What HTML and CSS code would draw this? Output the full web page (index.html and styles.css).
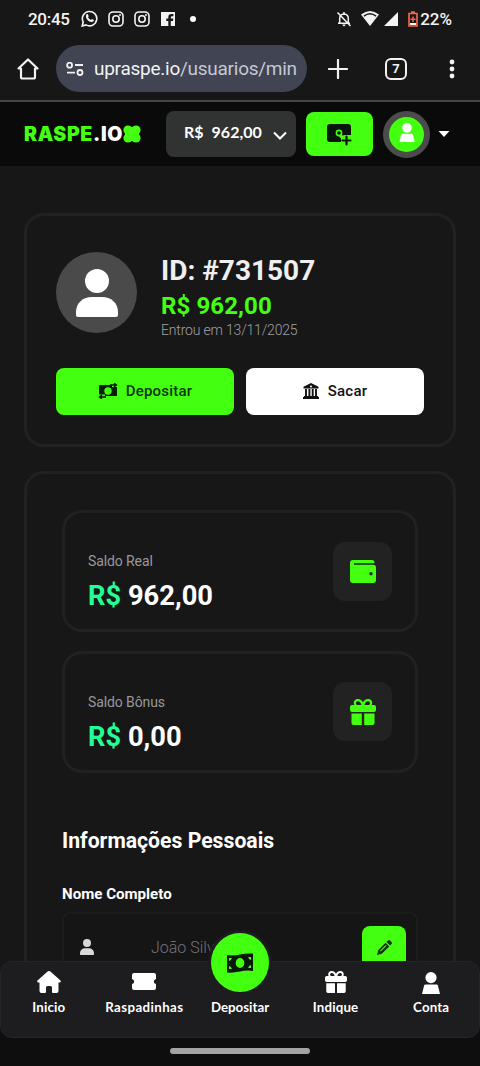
FILE: index.html
```html
<!DOCTYPE html>
<html lang="pt-BR">
<head>
<meta charset="utf-8">
<meta name="viewport" content="width=device-width, initial-scale=1">
<title>RASPE.IO - Minha conta</title>
<link rel="stylesheet" href="styles.css">
</head>
<body>
<svg class="defs" aria-hidden="true">
  <symbol id="instagram" viewBox="0 0 16 16"><g fill="none" stroke="currentColor" stroke-width="1.6"><rect x="1" y="1" width="14" height="14" rx="4"/><circle cx="8" cy="8" r="3.2"/></g><circle cx="12" cy="4" r="1"/></symbol>
  <symbol id="gift" viewBox="0 0 26 26"><path fill-rule="evenodd" d="M2 6H4.300C2.700 2.500 5 0 8 0C10.300 0 12 1.400 13 3.200C14 1.400 15.700 0 18 0C21 0 23.300 2.500 21.700 6H24Q26 6 26 8V11Q26 13 24 13H2Q0 13 0 11V8Q0 6 2 6ZM7 6H11.400C10.800 3.800 9.800 2.300 8 2.300C5.900 2.300 5.300 4.600 7 6ZM19 6C20.700 4.600 20.100 2.300 18 2.300C16.200 2.300 15.200 3.800 14.600 6Z"/><path d="M1.500 14.500H11.800V26H3.500Q1.500 26 1.500 24ZM14.200 14.500H24.500V24Q24.500 26 22.500 26H14.200Z"/></symbol>
  <symbol id="user" viewBox="0 0 42 48"><circle cx="21" cy="12" r="12"/><path d="M0 46V43C0 34 7 28 16 28H26C35 28 42 34 42 43V46Q42 48 40 48H2Q0 48 0 46Z"/></symbol>
  <symbol id="pawn" viewBox="0 0 18 22"><circle cx="9" cy="5.600" r="5.600"/><path d="M3.500 12.500H14.500Q15.500 12.500 15.900 13.600L18 22H0L2.100 13.600Q2.500 12.500 3.500 12.500Z"/></symbol>
</svg>
<div class="screen">
  <div class="status">
    <span class="clock">20:45</span>
    <div class="notices">
      <svg width="17" height="17" viewBox="0 0 17 17"><path d="M1.200 16L2.200 12A7.200 7.200 0 1 1 5 14.900Z" fill="none" stroke="currentColor" stroke-width="1.600"/><path d="M5.500 4.200L6.800 4L7.700 6.200L7 7.200Q7.900 9 9.900 9.900L11 8.900L13 9.900Q12.800 12 10.800 12Q6.600 11.600 5 7.400Q4.700 5.300 5.500 4.200Z"/></svg>
      <svg width="16" height="16"><use href="#instagram"/></svg>
      <svg width="16" height="16"><use href="#instagram"/></svg>
      <svg width="14" height="14" viewBox="0 0 14 14"><path d="M0 0H14V14H9.800V8.900H12L12.300 6.500H9.800V5.200Q9.800 4.200 11 4.200H12.400V2.100H10.500Q7.300 2.100 7.300 5V6.500H5.300V8.900H7.300V14H0Z"/></svg>
      <i class="more-dot"></i>
    </div>
    <div class="signals">
      <svg class="bell" width="16" height="16" viewBox="0 0 16 16"><g fill="none" stroke="currentColor" stroke-width="1.500"><path d="M3.700 12V7.500Q3.700 3.200 8 3Q12.300 3.200 12.300 7.500V12M2 12.300H14M8 1V3M1.500 1.500L14.500 15"/></g><path d="M6.300 13.500H9.700Q9.400 15.300 8 15.300Q6.600 15.300 6.300 13.500Z"/></svg>
      <svg class="wifi" width="18" height="15" viewBox="0 0 18 15"><path d="M0 3.600Q9-3.500 18 3.600L9 15Z"/><path d="M2.900 5.100Q9 .4 15.100 5.100" fill="none" stroke="#171819" stroke-width="1.400"/></svg>
      <svg class="cell" width="14" height="14" viewBox="0 0 14 14"><path d="M14 0V14H0Z"/></svg>
      <svg class="battery" width="10" height="16" viewBox="0 0 10 16"><path d="M1 2.500H9V15H1ZM3 1H7" fill="none" stroke="#ef6648" stroke-width="1.700"/><path d="M5 5.500V11M2.400 8.200H7.600" stroke="#ef6648" stroke-width="1.500"/><path d="M2 12H8V14H2Z"/></svg>
      <span>22%</span>
    </div>
  </div>

  <div class="browser">
    <svg class="home" width="22" height="22" viewBox="0 0 22 22"><path d="M4 10.500H1.500L11 1.500L20.500 10.500H18V19Q18 20.500 16.500 20.500H5.500Q4 20.500 4 19Z" fill="none" stroke="currentColor" stroke-width="2.200" stroke-linejoin="round"/></svg>
    <div class="address">
      <svg width="18" height="14" viewBox="0 0 18 14"><g fill="none" stroke="currentColor" stroke-width="1.800"><circle cx="3.600" cy="3.200" r="2.500"/><circle cx="14" cy="10.500" r="2.500"/><path d="M9 3H17M1 10.600H9"/></g></svg>
      <span class="url">upraspe.io<span>/usuarios/min</span></span>
    </div>
    <svg class="plus" width="20" height="20" viewBox="0 0 20 20"><path d="M10 1V19M1 10H19" fill="none" stroke="currentColor" stroke-width="2.200" stroke-linecap="round"/></svg>
    <span class="tabs">7</span>
    <svg class="kebab" width="6" height="20" viewBox="0 0 6 20"><circle cx="3" cy="3" r="2.400"/><circle cx="3" cy="10" r="2.400"/><circle cx="3" cy="17" r="2.400"/></svg>
  </div>

  <header class="site-header">
    <div class="logo"><span class="logo-green">RASPE</span><span>.IO</span><svg width="18" height="18" viewBox="0 0 18 18"><circle cx="5" cy="5" r="4.600"/><circle cx="13" cy="5" r="4.600"/><circle cx="5" cy="13" r="4.600"/><circle cx="13" cy="13" r="4.600"/><path d="M5 2H13V5H16V13H13V16H5V13H2V5H5Z"/></svg></div>
    <div class="balance"><span>R$</span><span>962,00</span><svg width="14" height="9" viewBox="0 0 14 9"><path d="M1 1.500L7 7.500L13 1.500" fill="none" stroke="currentColor" stroke-width="2"/></svg></div>
    <div class="add-funds"><svg width="25" height="22" viewBox="0 0 25 22"><rect x="0" y="0" width="24" height="18" rx="3" fill="#07150b"/><path d="M14 13Q15 11 18 11H25V22H14Z" fill="#43ff10"/><circle cx="12" cy="9" r="2.600" fill="none" stroke="#43ff10" stroke-width="1.600"/><path d="M13 11L17 16" stroke="#43ff10" stroke-width="3"/><path d="M19.500 12.500V20.500M15.500 16.500H23.500" stroke="#07150b" stroke-width="2.200" stroke-linecap="round"/></svg></div>
    <div class="header-avatar"><svg width="16" height="19"><use href="#pawn"/></svg></div>
    <svg class="caret" width="12" height="6" viewBox="0 0 12 6"><path d="M.5 0H11.500L6 6Z"/></svg>
  </header>

  <main class="content">
    <section class="panel profile">
      <div class="identity">
        <div class="avatar"><svg width="42" height="48"><use href="#user"/></svg></div>
        <div class="who">
          <h1>ID: #731507</h1>
          <strong>R$ 962,00</strong>
          <small>Entrou em 13/11/2025</small>
        </div>
      </div>
      <div class="actions">
        <a class="button deposit"><svg width="20" height="16" viewBox="0 0 20 16"><path fill-rule="evenodd" d="M2 2H14V4H19V13H7V11.500H1V3Q1 2 2 2ZM10 4.300A3.700 3.700 0 1 0 10 11.700A3.700 3.700 0 1 0 10 4.300Z"/><path d="M12 2H18M16 .2L18.500 2L16 4M8 14H1.500M4 12L1.500 14L4 15.800" fill="none" stroke="currentColor" stroke-width="1.400"/></svg>Depositar</a>
        <a class="button withdraw"><svg width="16" height="16" viewBox="0 0 16 16"><path d="M8 0L15.500 3.800V5.500H.5V3.800ZM1 13H15V14H16V16H0V14H1Z"/><path d="M3 6V13M6.400 6V13M9.700 6V13M13 6V13" stroke="currentColor" stroke-width="1.900"/><circle cx="8" cy="3.500" r="1" fill="#fff"/></svg>Sacar</a>
      </div>
    </section>

    <section class="panel account">
      <div class="wallet-card">
        <div><p>Saldo Real</p><strong><span>R$</span> 962,00</strong></div>
        <div class="tile"><svg width="26" height="23" viewBox="0 0 26 23"><path fill-rule="evenodd" d="M3 0H22Q24.500 0 24.500 2.500V3.300H4V4.700H23Q26 4.700 26 7.500V20Q26 23 23 23H3Q0 23 0 20V3Q0 0 3 0ZM21 12A1.700 1.700 0 1 0 21 15.400A1.700 1.700 0 1 0 21 12Z"/></svg></div>
      </div>
      <div class="wallet-card">
        <div><p>Saldo Bônus</p><strong><span>R$</span> 0,00</strong></div>
        <div class="tile"><svg width="26" height="26"><use href="#gift"/></svg></div>
      </div>
      <h2>Informações Pessoais</h2>
      <label>Nome Completo</label>
      <div class="field">
        <svg width="14" height="16"><use href="#user"/></svg>
        <span>João Silva</span>
        <div class="edit"><svg width="15" height="15" viewBox="0 0 15 15"><path fill-rule="evenodd" d="M0 15L1.200 10.200L8.600 2.800L12.200 6.400L4.800 13.800ZM9.500 1.900L11 .5Q12 -.4 13 .5L14.500 2Q15.400 3 14.500 4L13.100 5.500ZM3 10.700L8.800 4.900L9.600 5.700L3.800 11.500Z"/></svg></div>
      </div>
    </section>
  </main>

  <div class="bottom">
    <nav class="dock">
      <a><svg width="24" height="22" viewBox="0 0 24 22"><path d="M10.600.6Q12-.6 13.400.6L23.500 9.500Q24.500 11.200 22.500 11.600H21.500V20Q21.500 22 19.500 22H16Q15 22 15 21V16.500Q15 15 13.500 15H10.500Q9 15 9 16.500V21Q9 22 8 22H4.500Q2.500 22 2.500 20V11.600H1.500Q-.5 11.200.5 9.500Z"/></svg><span>Inicio</span></a>
      <a><svg width="24" height="22" viewBox="0 0 24 22"><path d="M2 2H22Q24 2 24 4V8Q21.800 8.500 21.800 10.500Q21.800 12.500 24 13V17Q24 19 22 19H2Q0 19 0 17V13Q2.200 12.500 2.200 10.500Q2.200 8.500 0 8V4Q0 2 2 2Z"/></svg><span>Raspadinhas</span></a>
      <a class="primary"><i class="orb"><svg width="26" height="20" viewBox="0 0 26 20"><path fill-rule="evenodd" d="M0 2Q6.500 3 13 1.500T26 .5V18Q19.500 17 13 18.500T0 19.500ZM13 5A4.300 5 0 1 0 13 15A4.300 5 0 1 0 13 5ZM2 5V8Q4.500 7.700 4.800 5ZM2 16V13Q4.500 13.300 4.800 16ZM24 4V7Q21.500 6.700 21.200 4ZM24 15V12Q21.500 12.300 21.200 15Z"/></svg></i><span>Depositar</span></a>
      <a><svg width="22" height="22"><use href="#gift"/></svg><span>Indique</span></a>
      <a><svg class="pawn" width="18" height="22"><use href="#pawn"/></svg><span>Conta</span></a>
    </nav>
    <i class="gesture"></i>
  </div>
</div>
</body>
</html>
```
FILE: styles.css
```css
* { box-sizing: border-box; }
body { margin: 0; background: #171718; color: #fff; font-family: Roboto, sans-serif; }
h1, h2, p { margin: 0; }
svg { display: block; flex: none; fill: currentColor; }
.defs { position: absolute; width: 0; height: 0; }
.screen { position: relative; display: flex; flex-direction: column; width: 480px; height: 1066px; overflow: hidden; }

.status { display: flex; align-items: center; height: 36px; padding: 1px 28px 0; color: #f3f3f3; font-size: 17px; font-weight: 500; }
.clock { width: 53px; letter-spacing: -.3px; }
.notices { display: flex; align-items: center; gap: 10px; }
.notices svg:nth-child(4) { margin-left: 1px; }
.more-dot { width: 6px; height: 6px; margin-left: 5px; border-radius: 50%; background: #fff; }
.signals { display: flex; align-items: center; margin-left: auto; }
.wifi { margin-left: 9px; }
.cell { margin-left: 5px; }
.battery { margin: 0 2px 0 10px; }

.browser { display: flex; align-items: center; height: 66px; padding: 1px 25px 0 17px; border-bottom: 2px solid #454545; color: #f2f2f2; }
.address { display: flex; align-items: center; gap: 10px; width: 251px; height: 47px; margin-left: 17px; padding-left: 10px; border-radius: 24px; background: #414452; }
.url { font-size: 19px; letter-spacing: -.26px; white-space: nowrap; }
.url span { color: #c5c8d2; }
.plus { margin-left: 21px; }
.tabs { display: flex; align-items: center; justify-content: center; width: 22px; height: 22px; margin-left: 37px; border: 2px solid; border-radius: 6px; font-size: 13px; font-weight: 700; }
.kebab { margin-left: 42px; }

.site-header { display: flex; align-items: center; flex: none; height: 64px; padding: 0 30px 0 24px; background: #0a0a0b; font-family: Lato, sans-serif; }
.logo { display: flex; align-items: center; width: 142px; font-family: Inter, sans-serif; font-size: 19.500px; font-weight: 900; letter-spacing: .65px; }
.logo span { flex: none; }
.logo-green { color: #43ff10; }
.logo svg { color: #43ff10; }
.balance { display: flex; align-items: center; gap: 8px; width: 130px; height: 46px; padding: 0 9px 5px 18px; border-radius: 8px; background: #313332; font-size: 16px; font-weight: 700; }
.balance svg { margin: 7px 0 0 auto; }
.add-funds { display: flex; align-items: center; justify-content: center; width: 67px; height: 44px; margin-left: 10px; padding-top: 2px; border-radius: 8px; background: #43ff10; }
.header-avatar { display: flex; align-items: center; justify-content: center; width: 47px; height: 47px; margin-left: 10px; padding-bottom: 3px; border: 6px solid #4b4b4b; border-radius: 50%; background: #43ff10; }
.caret { margin-left: auto; }

.content { display: flex; flex-direction: column; gap: 24px; flex: 1; min-height: 0; padding: 47px 24px 0; overflow: hidden; }
.panel { flex: none; border: 3px solid #212122; border-radius: 20px; }
.profile { height: 234px; padding: 36px 29px 29px; }
.identity { display: flex; gap: 24px; height: 81px; }
.avatar { display: flex; align-items: center; justify-content: center; width: 81px; height: 81px; border-radius: 50%; background: #4a4a4a; }
.who { display: flex; flex-direction: column; padding-top: 2px; }
.who h1 { font-size: 28px; line-height: 34px; font-weight: 700; color: #efefef; }
.who strong { margin-top: 2px; font-size: 24px; line-height: 32px; font-weight: 700; letter-spacing: .1px; color: #43ff10; }
.who small { font-size: 14px; line-height: 16px; font-weight: 300; letter-spacing: -.18px; color: #a0a0a3; }
.actions { display: flex; gap: 12px; margin-top: 35px; }
.button { display: flex; align-items: center; justify-content: center; flex: 1; height: 47px; padding-bottom: 1px; border-radius: 8px; font-size: 15px; font-weight: 500; letter-spacing: .2px; }
.deposit { gap: 8px; background: #43ff10; color: #0a350e; }
.deposit svg { color: #061d09; }
.withdraw { gap: 9px; background: #fff; color: #111; }

.account { height: 700px; padding: 36px 35px; }
.wallet-card { display: flex; align-items: center; justify-content: space-between; height: 122px; margin-bottom: 18.500px; padding: 0 23px; border: 3px solid #212122; border-radius: 20px; }
.wallet-card p { margin-top: 25px; font-size: 14px; line-height: 20px; letter-spacing: -.1px; color: #98989b; }
.wallet-card strong { display: block; margin-top: 5px; font-size: 27.300px; line-height: 40px; }
.wallet-card strong span { color: #22ff94; }
.tile { display: flex; align-items: center; justify-content: center; width: 59px; height: 59px; border-radius: 12px; background: #222223; color: #43ff10; }
.account h2 { margin-top: 54px; font-size: 21.200px; line-height: 28px; }
.account label { display: block; margin-top: 27px; font-size: 15.100px; line-height: 24px; font-weight: 700; }
.field { display: flex; align-items: flex-start; height: 71px; margin-top: 6px; padding: 12px 10px 0 16px; border: 2px solid #1c1c1d; border-radius: 8px; background: #151516; }
.field > svg { margin-top: 13px; color: #d8d8d8; }
.field span { margin: 11px auto 0 57px; font-size: 16px; line-height: 22px; font-weight: 300; color: #737376; }
.edit { display: flex; justify-content: center; width: 44px; height: 45px; padding-top: 14px; border-radius: 8px; background: #43ff10; color: #102d0c; }

.bottom { position: absolute; inset: 961px 0 0; display: flex; flex-direction: column; align-items: center; gap: 10px; background: linear-gradient(transparent 20px, #0e0e0e 20px); }
.dock { position: relative; display: grid; grid-template-columns: repeat(5, 1fr); width: 100%; height: 77px; border: 1px solid #242426; border-radius: 12px; background: #1d1c1e; }
.dock a { display: flex; flex-direction: column; align-items: center; padding-top: 9px; font-family: Lato, sans-serif; font-size: 13.300px; font-weight: 700; letter-spacing: .15px; }
.dock span { margin-top: 4px; line-height: 20px; }
.dock a .pawn { position: relative; top: 1px; }
.dock a:nth-child(2) { letter-spacing: .4px; }
.dock .primary { padding-top: 31px; letter-spacing: 0; }
.orb { position: absolute; top: -29px; left: 210px; display: flex; align-items: center; justify-content: center; width: 58px; height: 59px; border-radius: 50%; background: #43ff10; box-shadow: 0 0 0 3px #1d1c1e; color: #06180a; }
.gesture { width: 140px; height: 6px; border-radius: 3px; background: #a4a4a4; }
```
